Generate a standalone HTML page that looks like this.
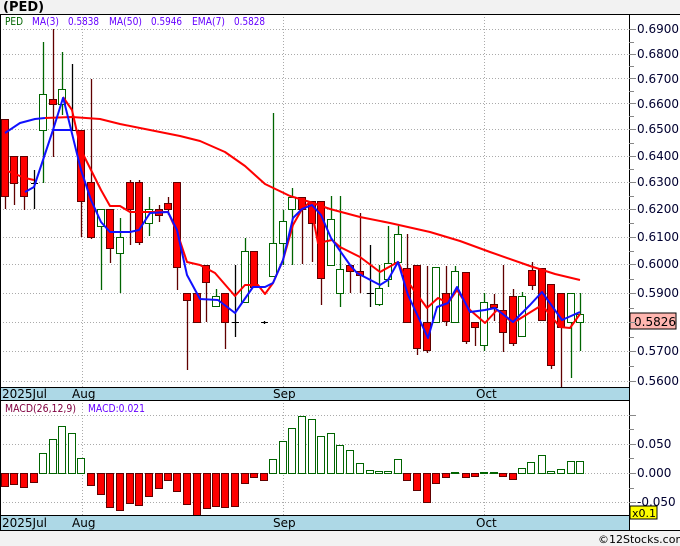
<!DOCTYPE html>
<html><head><meta charset="utf-8"><style>
body{margin:0;width:680px;height:546px;background:#f2f2f2;overflow:hidden;font-family:"Liberation Sans","DejaVu Sans",sans-serif}
svg{position:absolute;left:0;top:0}
</style></head><body>
<svg id="s" width="680" height="546" xmlns="http://www.w3.org/2000/svg" font-family="DejaVu Sans, Liberation Sans, sans-serif">
<rect x="0" y="14" width="680" height="516" fill="#fff"/>
<text x="3" y="11" font-size="13" font-weight="bold" fill="#000">(PED)</text>
<g id="grid" stroke="#aaa" stroke-dasharray="1,2" stroke-width="1"></g>
<g id="c"></g>
<rect x="0" y="387" width="629" height="13" fill="#add8e6"/>
<rect x="0" y="515" width="629" height="15" fill="#add8e6"/>
<line x1="0" y1="387.5" x2="629" y2="387.5" stroke="#000"/>
<line x1="0" y1="400.5" x2="629" y2="400.5" stroke="#000"/>
<line x1="0" y1="515.5" x2="629" y2="515.5" stroke="#000"/>
<line x1="0" y1="530.5" x2="680" y2="530.5" stroke="#000"/>
<line x1="0" y1="14.5" x2="680" y2="14.5" stroke="#000"/>
<line x1="629.5" y1="14" x2="629.5" y2="530" stroke="#000"/>
<line x1="0.5" y1="14" x2="0.5" y2="530" stroke="#000"/>
<g font-size="12" fill="#000">
<text x="2" y="398">2025Jul</text><text x="72" y="398">Aug</text><text x="273" y="398">Sep</text><text x="476" y="398">Oct</text>
<text x="2" y="527">2025Jul</text><text x="72" y="527">Aug</text><text x="273" y="527">Sep</text><text x="476" y="527">Oct</text>
</g>
<g font-size="11">
<text x="5" y="25" fill="#006400" textLength="18" lengthAdjust="spacingAndGlyphs">PED</text>
<text x="32" y="25" fill="#6600ff" textLength="27" lengthAdjust="spacingAndGlyphs">MA(3)</text><text x="68" y="25" fill="#6600ff" textLength="31" lengthAdjust="spacingAndGlyphs">0.5838</text>
<text x="109" y="25" fill="#6600ff" textLength="33" lengthAdjust="spacingAndGlyphs">MA(50)</text><text x="151" y="25" fill="#6600ff" textLength="31" lengthAdjust="spacingAndGlyphs">0.5946</text>
<text x="192" y="25" fill="#6600ff" textLength="33" lengthAdjust="spacingAndGlyphs">EMA(7)</text><text x="234" y="25" fill="#6600ff" textLength="31" lengthAdjust="spacingAndGlyphs">0.5828</text>
<text x="5" y="412" fill="#800040" textLength="71" lengthAdjust="spacingAndGlyphs">MACD(26,12,9)</text>
<text x="88" y="412" fill="#6600ff" textLength="57" lengthAdjust="spacingAndGlyphs">MACD:0.021</text>
</g>
<g id="ax" font-size="12" fill="#000030">
<text x="637" y="33">0.6900</text><text x="637" y="58">0.6800</text><text x="637" y="83">0.6700</text><text x="637" y="108">0.6600</text><text x="637" y="133">0.6500</text><text x="637" y="160">0.6400</text><text x="637" y="186">0.6300</text><text x="637" y="213">0.6200</text><text x="637" y="241">0.6100</text><text x="637" y="268">0.6000</text><text x="637" y="297">0.5900</text><text x="637" y="355">0.5700</text><text x="637" y="385">0.5600</text>
<text x="637" y="448">0.050</text><text x="637" y="477">0.000</text><text x="637" y="506">-0.050</text>
</g>
<rect x="630" y="313" width="46" height="16" fill="#ffb6b0" stroke="#000"/>
<text x="634" y="326" font-size="12" fill="#000">0.5826</text>
<rect x="630" y="506" width="27" height="13" fill="#ffff00" stroke="#000"/>
<text x="632" y="517" font-size="11" fill="#000">x0.1</text>
<text x="598" y="543" font-size="11" fill="#000">©12Stocks.com</text>
</svg>
<script>
var NS="http://www.w3.org/2000/svg",g=document.getElementById('grid'),c=document.getElementById('c'),s=document.getElementById('s');
function el(p,t,a){var e=document.createElementNS(NS,t);for(var k in a)e.setAttribute(k,a[k]);p.appendChild(e);return e}
var py=[29,54,78,103,129,156,182,209,237,264,293,322,351,381];
py.forEach(function(y){el(g,'line',{x1:0,y1:y+.5,x2:629,y2:y+.5});el(s,'line',{x1:629,y1:y+.5,x2:636,y2:y+.5,stroke:'#888'})});
for(var i=0;i<py.length-1;i++){var m=Math.round((py[i]+py[i+1])/2);el(s,'line',{x1:629,y1:m+.5,x2:634,y2:m+.5,stroke:'#888'})}
[415,444,473,502].forEach(function(y){el(g,'line',{x1:0,y1:y+.5,x2:629,y2:y+.5});el(s,'line',{x1:629,y1:y+.5,x2:636,y2:y+.5,stroke:'#888'})});
[429,458,488].forEach(function(y){el(s,'line',{x1:629,y1:y+.5,x2:634,y2:y+.5,stroke:'#888'})});
[82,283,484].forEach(function(x){el(g,'line',{x1:x+.5,y1:14,x2:x+.5,y2:387});el(g,'line',{x1:x+.5,y1:400,x2:x+.5,y2:515})});
var C=[[5,119,209,119,196,'r'],[14,156,205,156,183,'r'],[24,156,210,156,196,'r'],[34,170,209,183,184,'k'],[43,42,183,94,130,'g'],[53,29,157,99,104,'r'],[62,52,115,89,104,'g'],[72,64,130,130,131,'k'],[81,130,237,130,201,'r'],[91,79,239,182,237,'r'],[101,209,290,209,226,'g'],[110,209,263,209,248,'r'],[120,218,293,237,253,'g'],[130,180,245,182,209,'r'],[139,180,245,182,242,'r'],[149,197,236,209,223,'g'],[159,205,222,209,215,'r'],[168,197,215,203,209,'r'],[177,182,290,182,267,'r'],[187,293,370,293,300,'r'],[197,293,322,293,322,'r'],[206,265,322,265,282,'r'],[216,289,306,296,306,'g'],[225,293,349,293,322,'r'],[235,265,337,322,323,'k'],[245,238,302,251,302,'g'],[254,251,287,251,287,'r'],[264,321,324,322,323,'k'],[273,113,276,243,276,'g'],[283,210,265,221,243,'g'],[292,188,265,197,209,'g'],[302,197,264,197,209,'r'],[312,201,262,201,223,'r'],[321,201,305,201,278,'r'],[331,196,265,219,265,'g'],[340,196,307,269,293,'g'],[350,265,293,265,271,'r'],[360,213,293,271,275,'r'],[370,245,307,293,294,'k'],[379,265,306,288,304,'g'],[388,226,287,263,279,'g'],[398,226,262,234,262,'g'],[407,234,322,268,322,'r'],[417,265,355,265,348,'r'],[427,266,353,322,350,'r'],[436,267,322,267,322,'g'],[446,266,326,293,321,'r'],[455,266,322,271,322,'g'],[466,272,344,272,341,'r'],[475,322,346,322,327,'r'],[484,293,351,302,345,'g'],[494,294,321,304,307,'r'],[503,265,352,310,332,'r'],[513,289,346,296,343,'r'],[522,292,337,296,336,'g'],[532,262,290,270,285,'r'],[542,268,320,268,320,'r'],[551,284,369,284,365,'r'],[561,293,387,293,327,'r'],[571,293,378,293,322,'g'],[580,293,351,314,322,'g']];
C.forEach(function(d){var x=d[0],col=d[5]=='r'?'#600000':d[5]=='g'?'#006400':'#000';
el(c,'line',{x1:x+.5,y1:d[1],x2:x+.5,y2:d[2],stroke:col,'stroke-width':1.3});
var h=Math.max(1,d[4]-d[3]);
if(d[5]=='r')el(c,'rect',{x:x-3.5,y:d[3]+.5,width:7,height:h,fill:'#f00',stroke:'#600000'});
else if(d[5]=='g')el(c,'rect',{x:x-3.5,y:d[3]+.5,width:7,height:h,fill:'#fff',stroke:'#006400'});
else el(c,'line',{x1:x-3,y1:d[3]+.5,x2:x+4,y2:d[3]+.5,stroke:'#000'});});
function pl(pts,col){el(c,'polyline',{points:pts,fill:'none',stroke:col,'stroke-width':2,'stroke-linejoin':'round'})}
pl("45,118 72,117 100,119 120,124 150,130 180,136 200,141 225,152 245,166 265,184 290,196 310,202 330,209 360,217 390,223 430,232 460,241 490,252 530,266 555,274 580,280",'#f00');
pl("5,133 20,123 35,119 45,118",'#1010ff');
pl("5,170 25,178 34,180",'#f00');
pl("63,97 72,110 81,150 91,170 101,190 110,206 120,206 130,212 159,212 168,212 177,232 187,262 200,265 215,273 235,296 245,285 258,285 265,294 273,283 283,260 293,225 302,209 310,202 318,243 332,240 340,247 352,253 360,257 380,272 398,262 408,282 427,308 438,298 448,303 457,290 470,310 485,323 497,310 513,323 542,305 560,327 570,328 580,314",'#f00');
pl("63,97 81,170 91,200 101,222 110,232 120,232 130,232 139,230 150,213 168,212 177,230 187,275 200,299 218,300 235,313 253,287 265,287 273,283 283,260 293,218 302,209 312,205 321,215 331,238 350,265 357,273 380,285 388,280 398,262 408,295 428,338 437,307 448,303 457,287 470,312 485,310 495,308 513,322 530,305 542,292 562,320 580,312",'#1010ff');
pl("25,192 34,187 43,160 53,130 63,98",'#1010ff');
pl("53,130 63,130 72,130",'#1010ff');
var M=[[5,486],[14,484],[24,487],[34,482],[43,453],[53,439],[62,426],[72,433],[81,458],[91,485],[101,494],[110,507],[120,510],[130,503],[139,505],[149,496],[159,488],[168,480],[177,491],[187,504],[197,515],[207,508],[216,506],[225,507],[235,506],[245,483],[254,477],[264,480],[273,459],[283,441],[292,428],[302,416],[312,419],[321,436],[331,433],[340,445],[350,450],[360,463],[370,470],[379,471],[388,471],[398,459],[407,480],[417,490],[427,502],[436,483],[446,477],[455,472],[466,477],[475,476],[484,472],[494,472],[503,476],[513,479],[522,468],[531,462],[542,455],[551,471],[561,469],[571,461],[580,461]];
M.forEach(function(d){var y0=473,y1=d[1];if(y1>y0)el(c,'rect',{x:d[0]-3.5,y:y0+.5,width:7,height:y1-y0,fill:'#f00',stroke:'#600000'});else el(c,'rect',{x:d[0]-3.5,y:y1+.5,width:7,height:y0-y1,fill:'#fff',stroke:'#006400'});});
</script>
</body></html>
